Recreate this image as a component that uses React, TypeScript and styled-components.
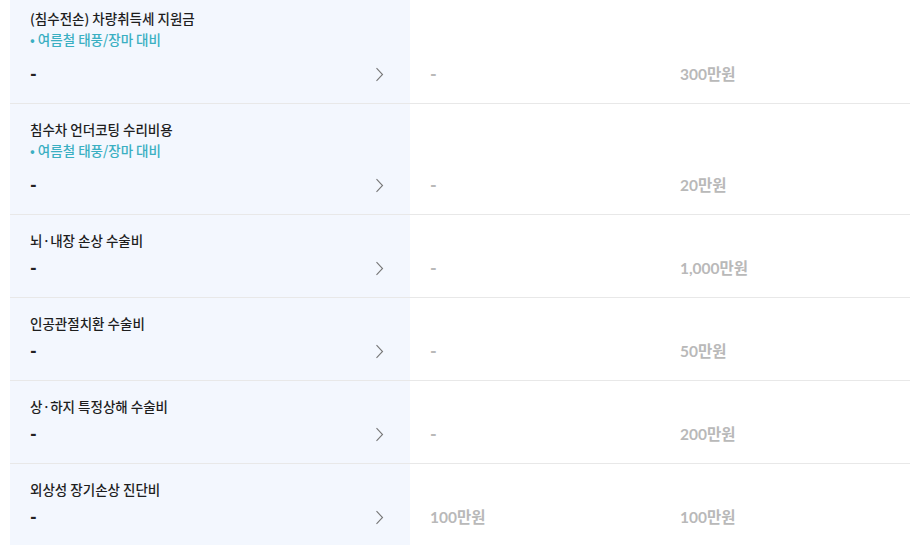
import React from "react";
import styled, { createGlobalStyle } from "styled-components";

const Global = createGlobalStyle`
  html, body { margin: 0; padding: 0; background: #fff; }
  body { font-family: "Lato", "Noto Sans CJK KR", sans-serif; overflow: hidden; }
`;

const Table = styled.div`
  width: 900px;
  margin: -7px 0 0 10px;
  display: flex;
  flex-direction: column;
`;

const Row = styled.div<{ $last?: boolean }>`
  display: grid;
  grid-template-columns: 400px 250px 250px;
  border-bottom: ${(p) => (p.$last ? "none" : "1px solid #e8e8e8")};
`;

const NameCell = styled.div`
  background: #f3f7fe;
  padding: 15px 26px 19px 20px;
  display: flex;
  flex-direction: column;
`;

const Title = styled.div`
  font-family: "Noto Sans CJK KR", sans-serif;
  font-size: 13.5px;
  font-weight: 500;
  line-height: 20px;
  color: #1e1e1e;
`;

const Sub = styled.div`
  font-family: "Noto Sans CJK KR", sans-serif;
  font-size: 13.5px;
  line-height: 20px;
  color: #3aafc2;
  font-weight: 500;
  margin: 1px 0 7px;
`;

const ValueLine = styled.div`
  margin-top: 8px;
  display: flex;
  align-items: center;
  justify-content: space-between;
  height: 20px;
`;

const Dash = styled.span`
  font-family: "Lato", sans-serif;
  font-weight: 900;
  font-size: 18px;
  line-height: 20px;
  color: #222;
`;

const AmountCell = styled.div`
  padding: 0 20px 19px;
  display: flex;
  align-items: flex-end;
`;

const Amount = styled.span<{ $empty?: boolean }>`
  font-family: "Lato", "Noto Sans CJK KR", sans-serif;
  font-weight: 700;
  font-size: ${(p) => (p.$empty ? "18px" : "15.5px")};
  line-height: 20px;
  height: 20px;
  color: #b9b9b9;
`;

const Chevron = () => (
  <svg width="9" height="15" viewBox="0 0 9 15" aria-hidden>
    <path d="M1.5 1.2 L7.5 7.5 L1.5 13.8" fill="none" stroke="#777" strokeWidth="1.1" />
  </svg>
);

type Item = { title: string; sub?: string; a: string; b: string };

const items: Item[] = [
  { title: "(침수전손) 차량취득세 지원금", sub: "• 여름철 태풍/장마 대비", a: "-", b: "300만원" },
  { title: "침수차 언더코팅 수리비용", sub: "• 여름철 태풍/장마 대비", a: "-", b: "20만원" },
  { title: "뇌·내장 손상 수술비", a: "-", b: "1,000만원" },
  { title: "인공관절치환 수술비", a: "-", b: "50만원" },
  { title: "상·하지 특정상해 수술비", a: "-", b: "200만원" },
  { title: "외상성 장기손상 진단비", a: "100만원", b: "100만원" },
];

export default function App() {
  return (
    <>
      <Global />
      <Table>
        {items.map((it, i) => (
          <Row key={i} $last={i === items.length - 1}>
            <NameCell>
              <Title>{it.title}</Title>
              {it.sub && <Sub>{it.sub}</Sub>}
              <ValueLine>
                <Dash>-</Dash>
                <Chevron />
              </ValueLine>
            </NameCell>
            <AmountCell>
              <Amount $empty={it.a === "-"}>{it.a}</Amount>
            </AmountCell>
            <AmountCell>
              <Amount $empty={it.b === "-"}>{it.b}</Amount>
            </AmountCell>
          </Row>
        ))}
      </Table>
    </>
  );
}
